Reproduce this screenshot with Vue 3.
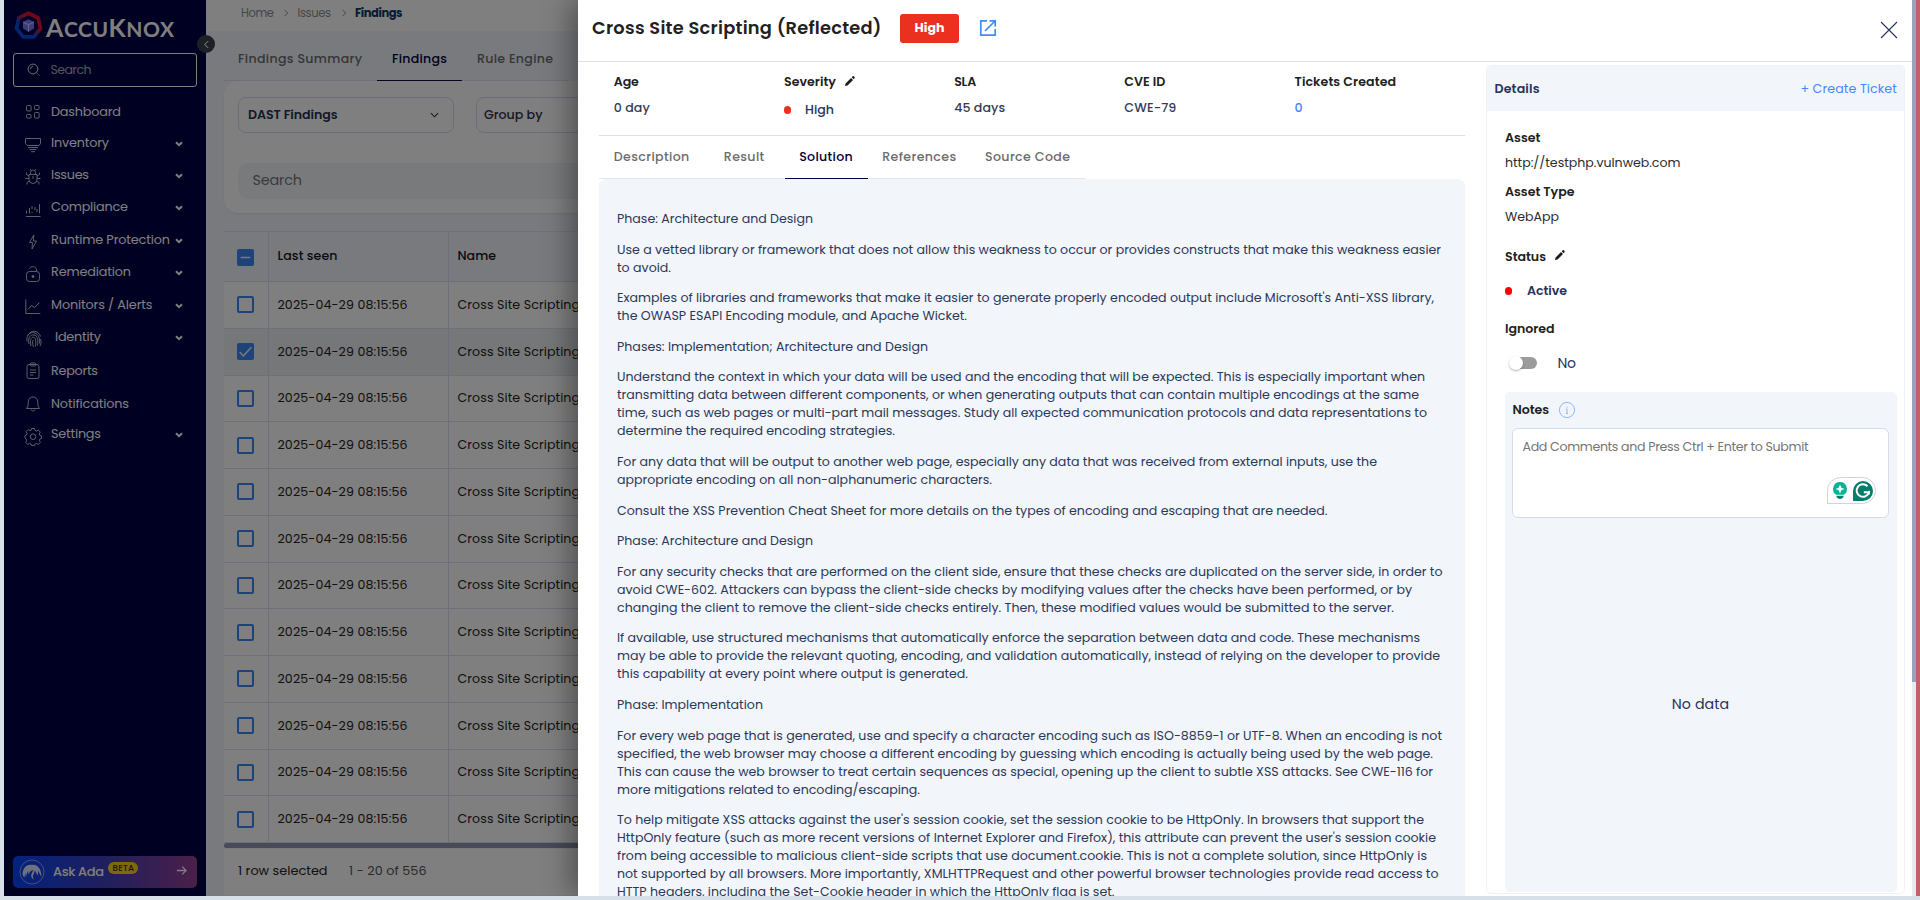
<script setup>
// Tracks a text run out so that it fills the given width in pixels.
const vFit = {
  mounted(el, binding) {
    const range = document.createRange()
    range.selectNodeContents(el)
    const natural = range.getBoundingClientRect().width
    const count = el.textContent.trim().length - 1
    if (count > 0) el.style.letterSpacing = `${(binding.value - natural) / count}px`
  }
}

const menu = [
  { label: 'Dashboard', icon: 'dashboard', w: 70, gap: 14.5 },
  { label: 'Inventory', icon: 'inventory', w: 58, gap: 11, more: true },
  { label: 'Issues', icon: 'issues', w: 38, gap: 12, more: true },
  { label: 'Compliance', icon: 'compliance', w: 77, gap: 12, more: true },
  { label: 'Runtime Protection', icon: 'runtime', w: 119, gap: 13, more: true },
  { label: 'Remediation', icon: 'remediation', w: 80, gap: 12, more: true },
  { label: 'Monitors / Alerts', icon: 'monitors', w: 101.5, gap: 13, more: true },
  { label: 'Identity', icon: 'identity', w: 46, gap: 12, more: true },
  { label: 'Reports', icon: 'reports', w: 47, gap: 14 },
  { label: 'Notifications', icon: 'notifications', w: 78, gap: 13 },
  { label: 'Settings', icon: 'settings', w: 50, gap: 10, more: true }
]

const rows = Array.from({ length: 12 }, (_, i) => ({ id: i, checked: i === 1 }))

const tabs = [
  { label: 'Description', w: 75.5, cls: 't1' },
  { label: 'Result', w: 40.5, cls: 't2' },
  { label: 'Solution', w: 53.5, cls: 't3', active: true },
  { label: 'References', w: 74, cls: 't4' },
  { label: 'Source Code', w: 85, cls: 't5' }
]

const solution = [
  [['Phase: Architecture and Design', 196]],
  [
    ['Use a vetted library or framework that does not allow this weakness to occur or provides constructs that make this weakness easier', 824],
    ['to avoid.', 54]
  ],
  [
    ["Examples of libraries and frameworks that make it easier to generate properly encoded output include Microsoft's Anti-XSS library,", 817],
    ['the OWASP ESAPI Encoding module, and Apache Wicket.', 350]
  ],
  [['Phases: Implementation; Architecture and Design', 311]],
  [
    ['Understand the context in which your data will be used and the encoding that will be expected. This is especially important when', 808],
    ['transmitting data between different components, or when generating outputs that can contain multiple encodings at the same', 802],
    ['time, such as web pages or multi-part mail messages. Study all expected communication protocols and data representations to', 810],
    ['determine the required encoding strategies.', 278]
  ],
  [
    ['For any data that will be output to another web page, especially any data that was received from external inputs, use the', 760],
    ['appropriate encoding on all non-alphanumeric characters.', 375]
  ],
  [['Consult the XSS Prevention Cheat Sheet for more details on the types of encoding and escaping that are needed.', 710.5]],
  [['Phase: Architecture and Design', 196]],
  [
    ['For any security checks that are performed on the client side, ensure that these checks are duplicated on the server side, in order to', 825.5],
    ['avoid CWE-602. Attackers can bypass the client-side checks by modifying values after the checks have been performed, or by', 795],
    ['changing the client to remove the client-side checks entirely. Then, these modified values would be submitted to the server.', 777]
  ],
  [
    ['If available, use structured mechanisms that automatically enforce the separation between data and code. These mechanisms', 803],
    ['may be able to provide the relevant quoting, encoding, and validation automatically, instead of relying on the developer to provide', 823],
    ['this capability at every point where output is generated.', 351]
  ],
  [['Phase: Implementation', 146]],
  [
    ['For every web page that is generated, use and specify a character encoding such as ISO-8859-1 or UTF-8. When an encoding is not', 825],
    ['specified, the web browser may choose a different encoding by guessing which encoding is actually being used by the web page.', 816],
    ['This can cause the web browser to treat certain sequences as special, opening up the client to subtle XSS attacks. See CWE-116 for', 816],
    ['more mitigations related to encoding/escaping.', 303]
  ],
  [
    ["To help mitigate XSS attacks against the user's session cookie, set the session cookie to be HttpOnly. In browsers that support the", 807],
    ["HttpOnly feature (such as more recent versions of Internet Explorer and Firefox), this attribute can prevent the user's session cookie", 819],
    ['from being accessible to malicious client-side scripts that use document.cookie. This is not a complete solution, since HttpOnly is', 810],
    ['not supported by all browsers. More importantly, XMLHTTPRequest and other powerful browser technologies provide read access to', 821.5],
    ['HTTP headers, including the Set-Cookie header in which the HttpOnly flag is set.', 497.5]
  ]
]
</script>

<template>
  <div class="screen">
    <div class="app">
      <aside class="sidebar">
        <div class="brand">
          <svg class="mark" viewBox="0 0 28 28">
            <defs>
              <linearGradient id="ring" x1="0.15" y1="0.9" x2="0.8" y2="0.15">
                <stop offset="0.3" stop-color="#0648e0" />
                <stop offset="0.72" stop-color="#e01030" />
              </linearGradient>
            </defs>
            <path d="M14 2.2 23.3 6.7 25.6 16.7 19.2 24.9H8.8L2.4 16.7 4.7 6.7Z" fill="#00004a" stroke="url(#ring)" stroke-width="3.6" stroke-linejoin="round" />
            <path d="M14 8 19.3 10.6V17L14 20 8.7 17V10.600Z" fill="#7a78ff" />
            <path d="M8.700 10.600 14 13.200 19.300 10.600M14 13.200V20" stroke="#c9c8ff" fill="none" />
          </svg>
          <span v-fit="128" class="wordmark"><b>A</b>CCU<b>K</b>NOX</span>
        </div>
        <div class="side-search">
          <svg viewBox="0 0 14 14" class="lens"><circle cx="6" cy="6" r="4.900" /><path d="M3.500 6A2.500 2.500 0 0 1 6 3.500M9.500 9.500l1 1M11.600 11.600l1 1" /></svg>
          <span v-fit="41">Search</span>
        </div>
        <nav>
          <div v-for="m in menu" :key="m.label" class="item" :class="[m.icon, { more: m.more }]" :style="{ marginTop: m.gap + 'px' }">
            <svg class="ico" viewBox="0 0 18 18">
              <g v-if="m.icon === 'dashboard'"><rect x="2.500" y="2.500" width="4.600" height="5.500" rx="1" /><rect x="10.500" y="2.500" width="4.600" height="4" rx="1" /><rect x="2.500" y="11.500" width="4.600" height="3.600" rx="1" /><rect x="10.500" y="9.500" width="4.600" height="5.600" rx="1" /></g>
              <g v-else-if="m.icon === 'inventory'"><path d="M1.500 2.500h15v5l-1.500 2H3l-1.500-2ZM4 11.500h10M5.500 13.500h7M7 15.700h4" /></g>
              <g v-else-if="m.icon === 'issues'"><path d="M6.500 6V4.500a2.500 2.500 0 0 1 5 0V6M5 6.500h8v5a4 4 0 0 1-8 0ZM7 2.500 6 1M11 2.500l1-1.500M5 8 2.500 6.500V4.500M13 8l2.500-1.500V4.500M5 10.500H1.500M13 10.500h3.500M5.500 13 3 14.500v2M12.500 13l2.500 1.500v2M9 8v3" /></g>
              <g v-else-if="m.icon === 'compliance'"><path d="M2 16.500h14.500M2.500 13.500v-3M5.500 13.500V8M8 9V6M8 13v-1M11 10V7M13 12V9M15.500 13.500V4" /></g>
              <g v-else-if="m.icon === 'runtime'"><path d="M9.800 2 5.500 9.500h3L8 16l4.500-8H9.300Z" /></g>
              <g v-else-if="m.icon === 'remediation'"><rect x="2.500" y="6.500" width="13" height="10" rx="3" /><path d="M5.500 3.500C7 .8 12 1 12.500 4.500v2" /><circle cx="9" cy="11.500" r="1" class="dot" /></g>
              <g v-else-if="m.icon === 'monitors'"><path d="M1.800 1.500v14h14.500M4 11.500 7.500 7.500 10.500 9.500 15.500 4.500" /></g>
              <g v-else-if="m.icon === 'identity'"><path d="M3 5.500C6-1 14 .5 15.500 6.500M2 11.500C.8 3 7 1.800 10 3c4 1.500 5 6 4.500 10.500M4 14C2.500 7 5.500 4.500 9 5c3.500.5 4.500 5 3.500 10.500M6 16C4.500 10 6 7 8.500 7.200c2.500.3 2.500 4.300 2 9.300M8.500 17C7 13 7.500 10 8.500 10M15.500 9c1 3 .5 5-.5 7" /></g>
              <g v-else-if="m.icon === 'reports'"><rect x="3" y="2.500" width="12" height="14" rx="2" /><rect x="6" y="1" width="6" height="3" rx="1.500" /><path d="M6 8h6M6 10.500h6M6 13h3.500" /></g>
              <g v-else-if="m.icon === 'notifications'"><path d="M2.500 13.500C4.500 11.500 4 9 4.300 6.500 4.700 3.500 6.500 2 9 2s4.300 1.500 4.700 4.500C14 9 13.500 11.500 15.500 13.500ZM7 14.500c.5 2 3.500 2 4 0" /></g>
              <g v-else><path d="M7.500 1.500h3l.5 2 1.500.6 1.800-1 2 2-1 1.900.6 1.500 1.600.5v2.500l-1.600.5-.6 1.500 1 1.900-2 2-1.800-1-1.500.6-.5 1.500h-3l-.5-1.500-1.500-.6-1.800 1-2-2 1-1.900-.6-1.500L1 11V8.500l1.500-.5.6-1.500-1-1.900 2-2 1.800 1L7 3.500Z" /><circle cx="9" cy="9.700" r="2.800" /></g>
            </svg>
            <span v-fit="m.w" class="lbl">{{ m.label }}</span>
            <svg v-if="m.more" class="caret" viewBox="0 0 8 6"><path d="M1 1.200 4 4.200 7 1.200" /></svg>
          </div>
        </nav>
        <div class="ada">
          <svg viewBox="0 0 26 26" class="ada-ico"><circle cx="13" cy="13" r="12" fill="none" stroke="#8f9eee" /><path d="M3.500 15C4 7.500 9 5 13 6c5-1 9 3 9.500 11.500-1.500-1-2-4-3.500-6 .3 2 0 4-.5 5-1-2-1.500-4-3-5 .3 3-2 4-1.500 7 .2 1 .8 1.500 1.500 2-2.500-.5-4-3-3-5.500.5-1.500 1.500-2.500 1.500-4-2 .5-3.500 2-4.500 4.500C9 14 9 13 9.500 12 8 13 7.500 15.500 7 18 6.300 17 6.500 15 6.500 14 5.500 15.500 6 17.500 5.500 18.500 4.500 17.500 3.500 16 3.500 15Z" fill="#dfe3ff" /></svg>
          <span v-fit="51" class="ada-t">Ask Ada</span>
          <span class="beta"><span v-fit="21.500">BETA</span></span>
          <svg viewBox="0 0 12 12" class="arrow"><path d="M1 6h10M6.800 1.800 11 6l-4.200 4.200" /></svg>
        </div>
      </aside>

      <main class="main">
        <header class="crumbs">
          <span v-fit="33" class="c1">Home</span>
          <svg viewBox="0 0 6 8"><path d="M1.500 .8 4.700 4 1.500 7.200" /></svg>
          <span v-fit="33.500" class="c2">Issues</span>
          <svg viewBox="0 0 6 8"><path d="M1.500 .8 4.700 4 1.500 7.200" /></svg>
          <b v-fit="47.500">Findings</b>
        </header>
        <div class="page-tabs">
          <div class="pt a"><span v-fit="124">Findings Summary</span></div>
          <div class="pt b on"><span v-fit="55">Findings</span></div>
          <div class="pt c"><span v-fit="76">Rule Engine</span></div>
        </div>
        <section class="filters">
          <div class="selects">
            <div class="select"><span v-fit="89.500">DAST Findings</span><svg viewBox="0 0 10 6"><path d="M1 1 5 5 9 1" /></svg></div>
            <div class="select wide"><span v-fit="58.500">Group by</span></div>
          </div>
          <div class="search"><span v-fit="49.500">Search</span></div>
        </section>
        <section class="table">
          <div class="tr head">
            <div class="td ck"><i class="box full"><svg viewBox="0 0 16 16"><path d="M3.500 8h9" /></svg></i></div>
            <div class="td seen"><span v-fit="60">Last seen</span></div>
            <div class="td"><span v-fit="38.500">Name</span></div>
          </div>
          <div v-for="r in rows" :key="r.id" class="tr" :class="{ sel: r.checked }">
            <div class="td ck"><i class="box" :class="{ full: r.checked }"><svg v-if="r.checked" viewBox="0 0 16 16"><path d="M2.500 8.500 6 12l7.500-8" /></svg></i></div>
            <div class="td seen"><span v-fit="130">2025-04-29 08:15:56</span></div>
            <div class="td"><span v-fit="122.500">Cross Site Scripting</span></div>
          </div>
        </section>
        <div class="hscroll"></div>
        <footer class="foot"><span v-fit="89.500">1 row selected</span><span v-fit="77.500" class="range">1 - 20 of 556</span></footer>
      </main>
      <div class="collapse"><svg viewBox="0 0 8 10"><path d="M6 1 2 5l4 4" /></svg></div>
      <div class="overlay"></div>

      <div class="drawer">
        <div class="sheet">
          <header class="dh">
            <h1 v-fit="289.500">Cross Site Scripting (Reflected)</h1>
            <div class="badge"><span v-fit="30">High</span></div>
            <svg class="open" viewBox="0 0 18 18"><path d="M8 1.800H1.800v14.400h14.400V10M10.500 1.800h5.700v5.700M16 2 6 12" /></svg>
            <svg class="close" viewBox="0 0 18 18"><path d="M1 1l16 16M17 1 1 17" /></svg>
          </header>
          <div class="body">
            <div class="left">
              <div class="facts">
                <div class="fact"><b v-fit="25">Age</b><span v-fit="36">0 day</span></div>
                <div class="fact">
                  <div class="sev"><b v-fit="52">Severity</b><svg class="pen" viewBox="0 0 10 10"><path d="M0 10l.6-2.500L6 2l2 2-5.500 5.500ZM6.700 1.300 7.900 0q.8-.2 1.300.4t.5 1.500L8.600 3.200Z" /></svg></div>
                  <div class="hi"><i></i><span v-fit="29">High</span></div>
                </div>
                <div class="fact"><b v-fit="22">SLA</b><span v-fit="51">45 days</span></div>
                <div class="fact"><b v-fit="41">CVE ID</b><span v-fit="52">CWE-79</span></div>
                <div class="fact"><b v-fit="101.500">Tickets Created</b><span class="link">0</span></div>
              </div>
              <div class="tabs">
                <div v-for="t in tabs" :key="t.label" class="tab" :class="[t.cls, { on: t.active }]"><span v-fit="t.w">{{ t.label }}</span></div>
              </div>
              <article class="solution">
                <p v-for="(p, i) in solution" :key="i"><span v-for="l in p" :key="l[0]" v-fit="l[1]" class="line">{{ l[0] }}</span></p>
              </article>
            </div>
            <aside class="details">
              <div class="det-head"><b v-fit="45">Details</b><span v-fit="96.500">+ Create Ticket</span></div>
              <div class="det-body">
                <div class="r r1"><b v-fit="35.500">Asset</b></div>
                <div class="r r2"><span v-fit="175.500">http://testphp.vulnweb.com</span></div>
                <div class="r r3"><b v-fit="69.500">Asset Type</b></div>
                <div class="r r4"><span v-fit="54">WebApp</span></div>
                <div class="r r5"><b v-fit="41">Status</b><svg class="pen" viewBox="0 0 10 10"><path d="M0 10l.6-2.500L6 2l2 2-5.500 5.500ZM6.700 1.300 7.900 0q.8-.2 1.300.4t.5 1.500L8.600 3.200Z" /></svg></div>
                <div class="r r6"><i></i><span v-fit="40">Active</span></div>
                <div class="r r7"><b v-fit="49.500">Ignored</b></div>
                <div class="r r8"><div class="toggle"><em></em></div><span v-fit="18.500">No</span></div>
                <div class="notes">
                  <div class="nh"><b v-fit="36.500">Notes</b><svg viewBox="0 0 18 18"><circle cx="9" cy="9" r="7.600" /><path d="M9 8v4.500M9 5.800v1M8 8h1M8 12.500h2" /></svg></div>
                  <div class="area">
                    <span v-fit="286">Add Comments and Press Ctrl + Enter to Submit</span>
                    <div class="helper">
                      <svg viewBox="0 0 14 17" class="bulb"><path d="M7 0a7 7 0 0 1 4 12.700H3A7 7 0 0 1 7 0Z" fill="#04b294" /><path d="M7 2.500 8.300 5.700 11.500 7 8.300 8.300 7 11.500 5.700 8.300 2.500 7 5.700 5.700Z" fill="#fff" /><path d="M3.500 13.800h7v1.200q-1.500 2-3.500 2t-3.500-2Z" fill="#047e6c" /></svg>
                      <svg viewBox="0 0 20 20" class="gram"><path d="M10 0a10 10 0 0 1 0 20H0V10A10 10 0 0 1 10 0Z" fill="#047e6c" /><path d="M14.500 5.200A6.300 6.300 0 1 0 16 11.200H10.800" fill="none" stroke="#fff" stroke-width="2" /><path d="M16 9.800v3.800" stroke="#fff" stroke-width="1.500" /></svg>
                    </div>
                  </div>
                  <div class="empty"><span v-fit="57.500">No data</span></div>
                </div>
              </div>
            </aside>
          </div>
        </div>
        <div class="vscroll"><div class="thumb"></div></div>
      </div>
    </div>
    <div class="edge"></div>
  </div>
</template>

<style>
body { background: #d7dfe9; overflow: hidden; }
</style>

<style scoped>
* { box-sizing: border-box; }
.screen { width: 1920px; height: 900px; padding: 0 0 4px 4px; display: flex; background: #d7dfe9; font: 12.6px/18px Poppins, Inter, "Open Sans", sans-serif; white-space: nowrap; overflow: hidden; }
.app { position: relative; width: 1912px; height: 896px; display: flex; overflow: hidden; }
.edge { width: 4px; height: 896px; background: #c0616b; }
svg { display: block; flex: none; fill: none; overflow: visible; }
span, b, h1 { flex: none; }

.sidebar { width: 202px; background: #000047; color: #fff; display: flex; flex-direction: column; padding: 0 9px 8px; flex: none; }
.brand { display: flex; height: 53px; padding: 11px 0 0 1px; }
.mark { width: 29px; height: 29px; }
.wordmark { font: 700 21px/29px Lato, sans-serif; margin: 3px 0 0 3px; height: 29px; }
.wordmark b { font-size: 25px; font-weight: 700; line-height: 24px; }
.side-search { height: 34px; border: 1px solid #fff; border-radius: 3px; display: flex; align-items: center; padding-left: 13px; font-size: 12.600px; color: #a9a9b8; }
.lens { width: 14px; height: 14px; stroke: #ddd; margin-right: 9.500px; }
nav { flex: 1; }
.item { height: 20px; line-height: 20px; display: flex; align-items: center; padding-left: 11px; font-size: 12.800px; position: relative; }
.ico { width: 18px; height: 18px; stroke: #d2d2d8; stroke-width: .9; margin-right: 9px; }
.ico .dot { fill: #d2d2d8; }
.more .ico { margin-top: 5px; }
.identity .ico { margin-right: 13px; transform: translateX(1px); }
.caret { position: absolute; left: 162px; top: 8.500px; width: 8px; height: 6px; stroke: #fff; stroke-width: 2; }
.ada { height: 32px; border-radius: 5px; background: linear-gradient(90deg, #0545ff, #3a3fc0 45%, #963f90); display: flex; align-items: center; padding-left: 6px; }
.ada-ico { width: 26px; height: 26px; }
.ada-t { font-size: 13px; font-weight: 500; margin-left: 8px; width: 51px; }
.beta { width: 30px; height: 12px; border-radius: 6px; background: #ffd21c; color: #33300f; font-size: 8.600px; font-weight: 500; line-height: 12px; margin: -9px 0 0 4px; padding-left: 4.500px; }
.arrow { width: 11px; height: 11px; stroke: #fff; margin: -3px 0 0 38px; stroke-width: 1.400; }

.main { width: 1710px; background: #f3f5fc; display: flex; flex-direction: column; color: #222; flex: none; }
.crumbs { height: 31px; background: #fff; padding: 2px 0 8px 35px; display: flex; align-items: center; font-size: 11.500px; color: #8a8f9a; flex: none; }
.crumbs svg { width: 6px; height: 8px; stroke: #8a8f9a; margin: 1px 7px 0 7.500px; }
.crumbs .c1 { width: 34px; } .crumbs .c2 { width: 36px; }
.crumbs .c1 + svg { margin-right: 9px; }
.crumbs b { color: #0b3a66; font-weight: 700; margin-left: 1px; }
.page-tabs { margin-left: 18px; width: 344px; height: 50px; border-bottom: 1px solid #dfe3f2; display: flex; flex: none; font-size: 12.600px; font-weight: 500; color: #6c6c6c; }
.pt { height: 50px; line-height: 56px; padding-left: 14px; flex: none; }
.pt.a { width: 153px; } .pt.b { width: 85px; padding-left: 15px; } .pt.c { padding-left: 15px; }
.pt.on { color: #00003c; border-bottom: 1px solid #00003c; }
.filters { margin-left: 18px; height: 132px; background: #fff; border-radius: 14px 0 0 14px; padding: 16px 0 0 14px; flex: none; box-shadow: 0 1px 2px #dfe3ee; }
.selects { display: flex; gap: 22px; }
.select { width: 216px; height: 36px; border: 1px solid #d5dcf0; border-radius: 8px; display: flex; align-items: center; justify-content: space-between; padding: 0 14px 0 9px; font-size: 12.600px; font-weight: 600; color: #263250; }
.select.wide { width: 600px; padding-left: 7px; font-weight: 500; }
.select svg { width: 9px; height: 6px; stroke: #263250; stroke-width: 1.200; }
.search { margin-top: 30px; height: 36px; line-height: 35px; border-radius: 11px 0 0 11px; background: #f3f5f8; padding-left: 14.500px; font-size: 14.400px; color: #757575; }
.table { margin: 18px 0 0 18px; flex: none; border-top: 1px solid #dbe5f8; }
.tr { height: 46.750px; display: flex; background: #fff; border-bottom: 1px solid #d6e1f6; font-size: 12.600px; color: #222; }
.tr.head { height: 50px; background: #f3f5fc; font-weight: 500; color: #161616; }
.tr.sel { background: #edeef1; }
.td { display: flex; align-items: center; padding-left: 8.500px; }
.head .td span { padding-bottom: 2px; }
.head .box { margin-top: 1px; }
.td.ck { width: 45px; padding-left: 13px; border-right: 1px solid #d6e1f6; }
.td.seen { width: 180px; border-right: 1px solid #d6e1f6; }
.box { width: 17px; height: 17px; border: 2px solid #3d86f0; border-radius: 2px; display: block; }
.box.full { background: #3d86f0; border: 0; }
.box svg { width: 17px; height: 17px; stroke: #e8f0ff; stroke-width: 1.500; }
.hscroll { height: 5px; margin-left: 18px; border-radius: 3px; background: #8c96ae; flex: none; }
.foot { flex: 1; margin: 1px 0 1px 18px; background: #fff; display: flex; align-items: center; padding: 0 0 2px 14px; font-size: 12.800px; }
.range { margin-left: 21.500px; color: #555; }
.collapse { position: absolute; left: 193px; top: 35px; width: 18px; height: 18px; border-radius: 50%; background: #3a414c; display: flex; align-items: center; justify-content: center; }
.collapse svg { width: 7px; height: 9px; stroke: #eee; stroke-width: 1.200; }
.overlay { position: absolute; inset: 0; background: rgba(0, 0, 0, .5); }

.drawer { position: absolute; left: 574px; top: 0; width: 1338px; height: 896px; background: #fff; display: flex; box-shadow: -8px 0 26px rgba(0, 0, 0, .36); }
.sheet { width: 1334px; flex: none; }
.vscroll { width: 4px; background: #e6ebf1; }
.thumb { height: 682px; background: #98a3bd; }
.dh { height: 62px; border-bottom: 1px solid #dedfe2; display: flex; padding-left: 14px; color: #212121; }
h1 { font-size: 17.800px; font-weight: 600; line-height: 56px; margin: 0; width: 289px; }
.badge { margin: 14px 0 0 19px; width: 59px; height: 29px; border-radius: 3px; background: #ec3020; color: #fff; font-weight: 700; line-height: 28px; padding-left: 14.500px; }
.open { width: 18px; height: 18px; margin: 19px 0 0 20px; stroke: #3f8cff; stroke-width: 1.700; }
.close { width: 18px; height: 18px; margin: 20.500px 14px 0 auto; stroke: #27335e; stroke-width: 1.100; }
.body { display: flex; height: 834px; overflow: hidden; }
.left { width: 866px; margin-left: 21px; flex: none; }
.facts { height: 74px; border-bottom: 1px solid #dedfe2; padding: 11px 0 0 14.800px; display: flex; }
.fact { width: 170.200px; display: flex; flex-direction: column; color: #333c52; font-weight: 500; align-items: flex-start; }
.fact b { font-weight: 600; color: #212121; margin-bottom: 8px; }
.sev { display: flex; }
.sev .pen { margin: 3px 0 0 9px; }
.pen { width: 10px; height: 10px; fill: #1c1c1c; }
.hi { display: flex; align-items: center; margin-top: 2px; color: #27335e; font-weight: 500; }
.hi i, .r6 i { width: 7px; height: 8px; border-radius: 4px; background: #ec3020; margin-right: 14px; }
.link { color: #3f7fff; }
.tabs { width: 486px; height: 43px; border-bottom: 1px solid #e3e5f2; display: flex; color: #6c6c6c; font-weight: 500; line-height: 42px; }
.tab { height: 43px; padding-left: 14.800px; flex: none; }
.t1 { width: 110px; } .t2 { width: 76px; } .t3 { width: 83px; padding-left: 14.200px; } .t4 { width: 103px; padding-left: 14.200px; } .t5 { padding-left: 14px; }
.tab.on { color: #00003c; border-bottom: 1px solid #00003c; }
.solution { background: #f2f5fa; border-radius: 8px 8px 0 0; height: 740px; padding: 31px 18px 0 18px; color: #2b3859; overflow: hidden; }
.solution p { margin: 0 0 12.600px; }
.line { display: block; height: 18px; font-size: 12.600px; }

.details { width: 419px; height: 829px; margin: 3px 0 0 21px; border: 1px solid #eff2f7; border-radius: 5px; flex: none; }
.det-head { height: 45px; background: #f2f5fa; margin: 0; padding: 0 7px 0 7.500px; display: flex; justify-content: space-between; align-items: center; color: #27335e; }
.det-head b { font-weight: 600; }
.det-head span { color: #3f8cff; }
.det-body { padding: 17px 7px 0 18px; }
b { font-weight: 600; }
.r { height: 20px; line-height: 20px; display: flex; align-items: center; color: #2c2c2c; }
.r b { color: #212121; }
.r2 { margin-top: 5px; } .r3 { margin-top: 9px; } .r4 { margin-top: 5px; } .r5 { margin-top: 20px; }
.r5 .pen { margin: -4px 0 0 9px; }
.r6 { margin-top: 14px; color: #27335e; font-weight: 600; }
.r6 i { background: #f00; margin-right: 15px; }
.r7 { margin-top: 18px; }
.r8 { margin-top: 14px; font-size: 14px; color: #27335e; }
.toggle { width: 24px; height: 12px; margin: 0 20.500px 0 8px; border-radius: 6px; background: #9b9b9b; }
.toggle em { display: block; width: 14px; height: 14px; margin: -1px 0 0 -4px; border-radius: 50%; background: #fff; box-shadow: 0 1px 2px rgba(0, 0, 0, .3); }
.notes { margin-top: 19px; height: 500px; background: #f2f5fa; border-radius: 5px; padding: 9px 8px 0 7px; color: #212121; display: flex; flex-direction: column; }
.nh { display: flex; align-items: center; height: 18px; padding-left: .5px; }
.nh svg { width: 18px; height: 18px; margin-left: 9px; stroke: #8fb8ff; }
.area { margin-top: 9px; height: 90px; background: #fff; border: 1px solid #d5dce9; border-radius: 6px; padding: 9px 9.500px; color: #757575; position: relative; flex: none; }
.helper { position: absolute; right: 12px; bottom: 13px; width: 49px; height: 27px; border: 1px solid #d0d2de; border-radius: 14px 14px 14px 0; display: flex; align-items: center; background: #fff; padding-left: 5px; }
.bulb { width: 14px; height: 17px; }
.gram { width: 20px; height: 20px; margin-left: 6px; }
.empty { flex: 1; display: flex; justify-content: center; padding-top: 176px; font-size: 14.200px; line-height: 20px; color: #27335e; }
</style>
